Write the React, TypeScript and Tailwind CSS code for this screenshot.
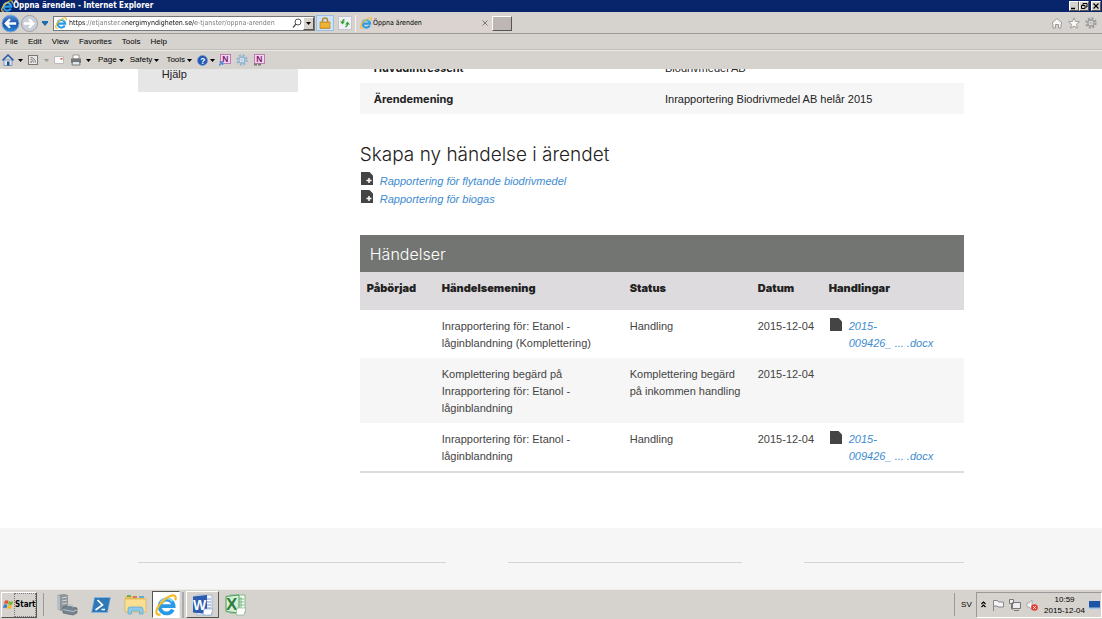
import type { ReactNode } from 'react'
import clsx from 'clsx'

type IconProps = { className?: string }

type Event = {
  text: string
  status: string
  date: string
  file?: { year: string; name: string }
}

const file = { year: '2015-', name: '009426_ ... .docx' }

const events: Event[] = [
  {
    text: 'Inrapportering för: Etanol - låginblandning (Komplettering)',
    status: 'Handling',
    date: '2015-12-04',
    file,
  },
  {
    text: 'Komplettering begärd på Inrapportering för: Etanol - låginblandning',
    status: 'Komplettering begärd på inkommen handling',
    date: '2015-12-04',
  },
  {
    text: 'Inrapportering för: Etanol - låginblandning',
    status: 'Handling',
    date: '2015-12-04',
    file,
  },
]

const menus = ['File', 'Edit', 'View', 'Favorites', 'Tools', 'Help']

const IeIcon = ({ className }: IconProps) => (
  <svg viewBox="0 0 24 24" className={className} fill="none" aria-hidden="true">
    <path d="M19.500 17A7.600 7.600 0 1 1 20.300 13.300H7" stroke="#2a9be6" strokeWidth="4.200" />
    <path d="M5.800 9.500a7.500 7.500 0 0 1 13-1.500" stroke="#8fdcfb" strokeWidth="1.600" />
    <path d="M6 22C2.500 23.500.5 21 2 17 4.500 10 14.500 1.500 20 1.500c3 0 3 3 2 5.500" stroke="#f5bb28" strokeWidth="2.400" />
  </svg>
)

const FileIcon = ({ plus = false }: { plus?: boolean }) => (
  <svg viewBox="0 0 12 13" className="h-[13px] w-3 shrink-0" aria-hidden="true">
    <path d="M0 0h8.500L12 3.500V13H0z" fill="#444" />
    {plus && <path d="M8 6v5M5.500 8.500h5" stroke="#fff" strokeWidth="1.500" />}
  </svg>
)

const Caret = ({ className = 'text-black' }: IconProps) => (
  <svg viewBox="0 0 5 3" className={clsx('h-[3px] w-[5px] shrink-0', className)} aria-hidden="true">
    <path d="M0 0h5L2.500 3z" fill="currentColor" />
  </svg>
)

const OneNoteIcon = ({ linked = false }: { linked?: boolean }) => (
  <svg viewBox="0 0 12 12" className="size-3" aria-hidden="true">
    <rect x="1.500" y=".5" width="10" height="9" fill="#f3d5ee" stroke="#c07ab6" />
    <text x="3.200" y="8.200" fontSize="8.500" fontWeight="700" fill="#7c1c74" fontFamily="Liberation Sans, sans-serif">
      N
    </text>
    {linked ? (
      <path d="M1 10.500h3m1 0h3" stroke="#777" strokeWidth="2" />
    ) : (
      <path d="M0 11.500l3-3M.5 8h3v3" stroke="#4a90d9" strokeWidth="1.500" fill="none" />
    )}
  </svg>
)

const GearIcon = ({ className }: IconProps) => (
  <svg viewBox="0 0 12 12" className={className} fill="none" aria-hidden="true">
    <circle cx="6" cy="6" r="4.700" stroke="currentColor" strokeWidth="2" strokeDasharray="2 1.690" />
    <circle cx="6" cy="6" r="3" fill="#f4f4f4" stroke="currentColor" strokeWidth="1.300" />
    <circle cx="6" cy="6" r="1.200" stroke="currentColor" strokeWidth=".8" />
  </svg>
)

const WindowButton = ({ label, children }: { label: string; children: ReactNode }) => (
  <button
    aria-label={label}
    className="flex h-[10px] w-[10px] items-center justify-center border border-t-white border-l-white border-r-[#555] border-b-[#555] bg-[#d6d3ce]"
  >
    <svg viewBox="0 0 8 8" className="size-2" fill="none" stroke="#000" aria-hidden="true">
      {children}
    </svg>
  </button>
)

const TitleBar = () => (
  <header className="flex h-3 shrink-0 items-center bg-[#08246b] pr-px pl-px font-['DejaVu_Sans_Condensed','DejaVu_Sans',sans-serif] text-[8px] leading-3 font-bold text-white">
    <IeIcon className="size-3" />
    <h1>Öppna ärenden - Internet Explorer</h1>
    <div className="ml-auto flex">
      <WindowButton label="Minimize">
        <path d="M1 6.500h4" strokeWidth="1.500" />
      </WindowButton>
      <WindowButton label="Restore">
        <path d="M3 3V1.500h4V5H5.500M1.500 3.500h3.500v3H1.500z" />
      </WindowButton>
      <span className="w-[2px]" />
      <WindowButton label="Close">
        <path d="M1.500 1.500l5 5m0-5l-5 5" strokeWidth="1.200" />
      </WindowButton>
    </div>
  </header>
)

const NavBar = () => (
  <div className="flex h-[22px] shrink-0 items-center border-b border-[#9c9a96] bg-[#d6d3ce] pt-px">
    <button aria-label="Back" className="ml-px">
      <svg viewBox="0 0 20 20" className="size-[19px]" aria-hidden="true">
        <defs>
          <linearGradient id="back" x2="0" y2="1">
            <stop stopColor="#5b96dc" />
            <stop offset=".5" stopColor="#1550a8" />
            <stop offset="1" stopColor="#2f8fe0" />
          </linearGradient>
        </defs>
        <circle cx="10" cy="10" r="9" fill="url(#back)" stroke="#8fa9cc" />
        <path d="M16 10H5m4.500-4.500L5 10l4.500 4.500" stroke="#fff" strokeWidth="2.500" fill="none" />
      </svg>
    </button>
    <button aria-label="Forward">
      <svg viewBox="0 0 20 20" className="size-[19px]" aria-hidden="true">
        <circle cx="10" cy="10" r="8.500" fill="#c9ced8" stroke="#9a9fa8" />
        <path d="M4 10h10m-4.500-4.500L14 10l-4.500 4.500" stroke="#fff" strokeWidth="2.500" fill="none" />
      </svg>
    </button>
    <button aria-label="Recent pages" className="mx-[3px]">
      <svg viewBox="0 0 6 5" className="h-[5px] w-[6px]" aria-hidden="true">
        <path d="M0 0h6v1.500L3 5 0 1.500z" fill="#1b6dab" />
      </svg>
    </button>
    <div className="ml-[2px] flex h-[15px] w-[262px] items-center border border-[#777] bg-white pl-px">
      <IeIcon className="size-3 shrink-0" />
      <input
        aria-label="Address"
        defaultValue="https://etjanster.energimyndigheten.se/e-tjanster/oppna-arenden"
        className="ml-[2px] h-[13px] min-w-0 flex-1 bg-[linear-gradient(90deg,#111_17px,#777_17px,#777_55px,#111_55px,#111_126px,#777_126px)] bg-clip-text font-['DejaVu_Sans_Condensed','DejaVu_Sans',sans-serif] text-[7px] text-transparent outline-none"
      />
      <svg viewBox="0 0 10 10" className="mr-px size-[10px] shrink-0" fill="none" stroke="#555" aria-hidden="true">
        <circle cx="6" cy="4" r="3" />
        <path d="M4 6L1 9.500" strokeWidth="1.300" />
      </svg>
      <button
        aria-label="Show address bar autocomplete"
        className="flex h-[13px] w-[11px] items-center justify-center border border-white border-r-[#555] border-b-[#555] bg-[#d6d3ce]"
      >
        <Caret />
      </button>
    </div>
    <button aria-label="Security report" className="ml-px flex h-4 w-[18px] justify-center border border-[#9abfe4] bg-[#cde2f7]">
      <svg viewBox="0 0 12 14" className="h-[14px] w-3" aria-hidden="true">
        <path d="M3.500 7V4.500a2.500 2.500 0 0 1 5 0V7" fill="none" stroke="#b88a2c" strokeWidth="1.500" />
        <rect x="1" y="6" width="10" height="6.500" fill="#e5a321" stroke="#b97b13" strokeWidth=".6" />
        <path d="M1.500 8h9m-9 2h9" stroke="#f5cb5e" strokeWidth=".8" />
      </svg>
    </button>
    <button aria-label="Refresh" className="ml-1 flex size-[14px] items-center justify-center border border-[#c5c5cf] bg-[#f2f1f7]">
      <svg viewBox="0 0 12 12" className="size-3" aria-hidden="true">
        <path d="M5.500 2.500Q3.500 3 3.500 5M6.500 10Q8.500 9.500 8.500 7" fill="none" stroke="#35a12e" strokeWidth="1.400" />
        <path d="M1 4.500h5L3.500 7.500zM6 7.500h5L8.500 4.500z" fill="#35a12e" />
      </svg>
    </button>
    <div className="ml-[3px] flex h-[17px] w-[137px] items-center border-l border-[#f3f1ee] bg-[#dad3cf] pr-1 pl-1">
      <IeIcon className="size-3" />
      <span className="ml-px text-[7px] text-black font-['DejaVu_Sans_Condensed','DejaVu_Sans',sans-serif]">
        Öppna ärenden
      </span>
      <button aria-label="Close tab" className="ml-auto">
        <svg viewBox="0 0 6 6" className="size-[6px]" stroke="#777" aria-hidden="true">
          <path d="M.5.5l5 5m0-5l-5 5" />
        </svg>
      </button>
    </div>
    <button
      aria-label="New tab"
      className="h-[15px] w-5 border border-t-white border-l-white border-r-[#555] border-b-[#555] bg-[#bdb6b2]"
    />
    <div className="mr-[5px] ml-auto flex items-center gap-[5px] text-[#999]">
      <button aria-label="Home">
        <svg viewBox="0 0 12 12" className="size-3" fill="#f8f8f8" stroke="currentColor" aria-hidden="true">
          <path d="M1 6l5-4.500L11 6l-1 1v4H7.500V7.500h-3V11H2V7z" />
        </svg>
      </button>
      <button aria-label="Favorites">
        <svg viewBox="0 0 12 12" className="size-3" fill="#f8f8f8" stroke="currentColor" strokeWidth=".9" aria-hidden="true">
          <path d="M6 .8l1.500 3.600 4 .3-3 2.600 1 3.900L6 9.100l-3.500 2.100 1-3.900-3-2.600 4-.3z" />
        </svg>
      </button>
      <button aria-label="Settings">
        <GearIcon className="size-3" />
      </button>
    </div>
  </div>
)

const MenuBar = () => (
  <nav className="flex h-4 shrink-0 items-center gap-[10px] border-b border-[#c2bfbb] bg-[#d6d3ce] pt-px pl-[5px]">
    {menus.map((menu) => (
      <button key={menu} className="text-[8px]">
        {menu}
      </button>
    ))}
  </nav>
)

const CommandBar = () => (
  <div className="flex h-[19px] shrink-0 items-center border-t border-[#eceae7] bg-[#d6d3ce] pl-[2px] text-[8px]">
    <button aria-label="Home page" className="flex items-center gap-1">
      <svg viewBox="0 0 12 12" className="size-3" aria-hidden="true">
        <path d="M2 6h8v5.500H2z" fill="#dce8f7" stroke="#5b79a8" strokeWidth=".7" />
        <path d="M.5 6.500L6 1l5.500 5.500" fill="none" stroke="#2e5fa8" strokeWidth="1.600" />
        <path d="M5 7.500h2.500v4H5z" fill="#264a82" />
      </svg>
      <Caret />
    </button>
    <button aria-label="Feeds" className="ml-[5px] flex items-center gap-[6px]">
      <svg viewBox="0 0 10 10" className="size-[10px]" fill="none" stroke="#777" aria-hidden="true">
        <rect x=".5" y=".5" width="9" height="9" fill="#e9e8e6" />
        <path d="M2.500 4.500a3 3 0 0 1 3 3M2.500 2.500a5 5 0 0 1 5 5" />
        <circle cx="3" cy="7" r=".5" />
      </svg>
      <Caret className="text-[#999]" />
    </button>
    <button aria-label="Read mail" className="ml-[5px]">
      <svg viewBox="0 0 10 8" className="h-2 w-[10px]" aria-hidden="true">
        <path d="M.5.5h9v7h-9z" fill="#fafafa" stroke="#bbb" />
        <path d="M6.500 2h2v1.500h-2z" fill="#e0442e" />
      </svg>
    </button>
    <button aria-label="Print" className="ml-[6px] flex items-center gap-1">
      <svg viewBox="0 0 12 12" className="size-3" aria-hidden="true">
        <path d="M3 1h6v4H3z" fill="#fff" stroke="#777" strokeWidth=".7" />
        <path d="M1 4.500h10V9H1z" fill="#777" />
        <path d="M2.500 7.500h7L10 11H2z" fill="#dbe7ee" stroke="#555" strokeWidth=".7" />
      </svg>
      <Caret />
    </button>
    <button className="ml-[7px] flex items-center gap-[2px]">
      Page <Caret />
    </button>
    <button className="ml-[6px] flex items-center gap-[2px]">
      Safety <Caret />
    </button>
    <button className="ml-[7px] flex items-center gap-[2px]">
      Tools <Caret />
    </button>
    <button aria-label="Help" className="ml-[5px] flex items-center gap-[2px]">
      <svg viewBox="0 0 12 12" className="size-[11px]" aria-hidden="true">
        <circle cx="6" cy="6" r="5.500" fill="#2458b8" stroke="#7799cf" strokeWidth=".8" />
        <text x="3.500" y="9.500" fontSize="9" fontWeight="700" fill="#fff" fontFamily="Liberation Sans, sans-serif">
          ?
        </text>
      </svg>
      <Caret />
    </button>
    <div className="ml-1 flex items-center gap-[5px]">
      <button aria-label="Send to OneNote">
        <OneNoteIcon />
      </button>
      <button aria-label="Options" className="text-[#8fb2d0]">
        <GearIcon className="size-3" />
      </button>
      <button aria-label="OneNote linked notes">
        <OneNoteIcon linked />
      </button>
    </div>
  </div>
)

const EventTable = () => (
  <section className="mt-[27px]">
    <h2 className="flex h-[37px] items-center bg-[#727571] pl-[10px] font-[Inter,sans-serif] text-[16px] font-light text-white">
      Händelser
    </h2>
    <table className="w-full table-fixed border-b-2 border-[#dcdcdc] text-left text-[11px] leading-[17px]">
      <colgroup>
        <col className="w-[75px]" />
        <col className="w-[188px]" />
        <col className="w-[128px]" />
        <col className="w-[71px]" />
        <col />
      </colgroup>
      <thead>
        <tr className="h-[38px] bg-[#dedbdf] align-top font-[Inter,sans-serif] text-[#222]">
          {['Påbörjad', 'Händelsemening', 'Status', 'Datum', 'Handlingar'].map((title) => (
            <th key={title} className="pt-2 pl-[7px] font-black">
              {title}
            </th>
          ))}
        </tr>
      </thead>
      <tbody>
        {events.map((event, i) => (
          <tr key={i} className="align-top text-[#444] even:bg-[#f6f6f6]">
            <td />
            <td className="pt-2 pr-5 pb-[6px] pl-[7px]">{event.text}</td>
            <td className="pt-2 pr-1 pb-[6px] pl-[7px]">{event.status}</td>
            <td className="pt-2 pb-[6px] pl-[7px] whitespace-nowrap">{event.date}</td>
            <td className="pt-2 pr-5 pb-[6px] pl-2">
              {event.file && (
                <a href="#" className="flex gap-[7px] text-[#3d8bd0] italic">
                  <FileIcon />
                  <span>
                    {event.file.year}
                    <wbr />
                    <span className="whitespace-nowrap">{event.file.name}</span>
                  </span>
                </a>
              )}
            </td>
          </tr>
        ))}
      </tbody>
    </table>
  </section>
)

const Taskbar = () => (
  <footer className="flex h-[30px] shrink-0 items-center border-t border-[#eeece9] bg-[#d6d3ce] text-[8px]">
    <button className="ml-px flex h-[26px] w-9 items-center border border-t-white border-l-white border-r-[#555] border-b-[#555] pl-px font-['DejaVu_Sans_Condensed','DejaVu_Sans',sans-serif] text-[8px] font-bold">
      <svg viewBox="0 0 12 12" className="size-[11px] shrink-0" aria-hidden="true">
        <path d="M2 2q2-1.500 4 0L5 5.500Q3 4.500 1 5.500z" fill="#e8542a" />
        <path d="M6.500 2.300q2 1.200 4.500 0L10 6Q7.500 7 5.500 5.700z" fill="#6db33f" />
        <path d="M.8 6.300q2-1 4 0L3.800 10q-2-1-3.800 0z" fill="#3c7dd0" />
        <path d="M5.300 6.600q2 1 4.500 0L8.800 10.300q-2.500 1-4.500-.2z" fill="#f5b921" />
      </svg>
      <span className="border border-dotted border-[#777] py-[5px]">Start</span>
    </button>
    <span className="ml-[6px] h-[23px] w-px bg-[#999]" />
    <div className="ml-[6px] flex items-center">
      <button aria-label="Server Manager" className="flex w-[34px] justify-center">
        <svg viewBox="0 0 22 22" className="size-[22px]" aria-hidden="true">
          <path d="M1 1l7-1 4 1v14l-7 2-4-2z" fill="#8d959b" />
          <path d="M1 1l3 1v14l-3-1z" fill="#b8bfc4" />
          <path d="M6 4l5-1M6 7l5-1M6 10l5-1" stroke="#d4d9dc" />
          <path d="M7 13l4-1 10 2v5l-4 2-10-2z" fill="#74838f" stroke="#59646d" strokeWidth=".7" />
          <path d="M12 12.500v-2l5 1v2M7 15.500l10 2 4-1.500" stroke="#b4c0c9" fill="none" />
        </svg>
      </button>
      <button aria-label="PowerShell" className="flex w-[34px] justify-center">
        <svg viewBox="0 0 20 16" className="h-4 w-5" aria-hidden="true">
          <path d="M3.500.5H19.500L16.500 15.500H.5z" fill="#2e78b8" stroke="#8ab9de" strokeWidth=".7" />
          <path d="M6.500 3l5 5-7 5M10.500 12.500H14" stroke="#fff" strokeWidth="1.700" fill="none" />
        </svg>
      </button>
      <button aria-label="Explorer" className="flex w-[34px] justify-center">
        <svg viewBox="0 0 23 21" className="h-[21px] w-[23px]" aria-hidden="true">
          <path d="M1 2h8l1 2h11v14H1z" fill="#e8c25c" />
          <path d="M3 2h4" stroke="#51a351" strokeWidth="1.500" />
          <path d="M9 3h4" stroke="#d9573c" strokeWidth="1.500" />
          <path d="M15 3h5" stroke="#4a9ad0" strokeWidth="1.500" />
          <path d="M1 5h21v13H1z" fill="#f8df91" stroke="#d8ac43" strokeWidth=".6" />
          <path d="M4 20v-5q0-2 2-2h11q2 0 2 2v5h-3.500v-3h-8v3z" fill="#8dcaea" stroke="#5ba6d0" strokeWidth=".7" />
        </svg>
      </button>
      <button
        aria-label="Internet Explorer"
        className="flex h-[27px] w-7 items-center justify-center border border-[#555] border-r-[#eee] border-b-white bg-white"
      >
        <IeIcon className="size-[22px]" />
      </button>
      <span className="mx-[2px] h-[26px] w-[2px] border-x border-[#aaa]" />
      <button
        aria-label="Word"
        className="flex h-[27px] w-[33px] items-center justify-center border border-t-white border-l-white border-r-[#555] border-b-[#555]"
      >
        <svg viewBox="0 0 22 22" className="size-[22px]" aria-hidden="true">
          <path d="M5 1h15v20H5z" fill="#f8fbff" stroke="#9fb7da" />
          <path d="M15 5h4m-4 3h4m-4 3h4m-4 3h4" stroke="#7297cb" />
          <path d="M1 2.500L15 1v19L1 18.500z" fill="#2b5db0" />
          <text x="1" y="15.500" fontSize="14" fontWeight="700" fill="#fff" fontFamily="Liberation Sans, sans-serif">
            W
          </text>
          <path d="M12 15h9l-2 6h-8z" fill="#fff" stroke="#8fa9d4" strokeWidth=".7" />
        </svg>
      </button>
      <button aria-label="Excel" className="flex w-[34px] justify-center">
        <svg viewBox="0 0 22 22" className="size-[22px]" aria-hidden="true">
          <path d="M5 1h15v18H5z" fill="#fafffa" stroke="#7cb882" />
          <path d="M14 5h5m-5 3h5m-5 3h5m-3-8v11" stroke="#7cb882" />
          <path d="M1 2.500L14 1v18L1 17.500z" fill="#d9eed8" stroke="#4c9d59" />
          <text x="1" y="16" fontSize="17" fontWeight="700" fill="#2a8039" fontFamily="Liberation Sans, sans-serif">
            X
          </text>
          <path d="M12 14h9l-2 7h-8z" fill="#fff" stroke="#88b58b" strokeWidth=".7" />
        </svg>
      </button>
    </div>
    <span className="ml-auto h-[23px] w-px bg-[#999]" />
    <span className="ml-[6px] w-[15px]">SV</span>
    <div className="flex h-[26px] items-center border border-t-[#999] border-l-[#999] border-r-white border-b-white pr-px pl-1">
      <button aria-label="Show hidden icons">
        <svg viewBox="0 0 5 7" className="h-[7px] w-[5px]" fill="none" stroke="#000" strokeWidth="1.200" aria-hidden="true">
          <path d="M.5 3l2-2 2 2M.5 6l2-2 2 2" />
        </svg>
      </button>
      <svg viewBox="0 0 12 12" className="ml-[6px] size-3" fill="#f4f4f4" stroke="#888" aria-hidden="true">
        <path d="M1.500 12V1.500h4l1 1.500h5v5H6L5 7H2" />
      </svg>
      <svg viewBox="0 0 12 12" className="ml-[5px] size-3" fill="#eee" stroke="#777" aria-hidden="true">
        <path d="M3.500 3.500h8v6h-8zM5 11.500h5M.5.500h4v4h-4zM2.500 5v5h2" />
      </svg>
      <svg viewBox="0 0 12 12" className="ml-[5px] size-3" aria-hidden="true">
        <path d="M1 4h2l3-3v10L3 8H1z" fill="#f4f4f4" stroke="#999" strokeWidth=".7" />
        <circle cx="8.500" cy="8.500" r="3.300" fill="#e8392f" />
        <path d="M7.200 7.200l2.600 2.600m0-2.600L7.200 9.800" stroke="#fff" />
      </svg>
      <time className="ml-[6px] text-center leading-[11px]">
        10:59
        <br />
        2015-12-04
      </time>
      <svg viewBox="0 0 11 8" className="ml-1 h-2 w-[11px]" aria-hidden="true">
        <path d="M0 0h11v8H0z" fill="#1d55a5" />
        <path d="M0 6.500h11V8H0z" fill="#9fc4ea" />
      </svg>
    </div>
  </footer>
)

export default function App() {
  return (
    <div className="flex h-screen flex-col overflow-hidden bg-white font-['Liberation_Sans',sans-serif] text-black">
      <TitleBar />
      <NavBar />
      <MenuBar />
      <CommandBar />
      <main className="flex min-h-0 flex-1 flex-col overflow-hidden text-[#222]">
        {/* the page is scrolled, its top slides in under the toolbars */}
        <div className="mx-auto -mt-[17px] flex w-3/4 items-start gap-[62px]">
          <aside className="w-40 shrink-0 bg-[#e6e6e6]">
            <a href="#" className="flex h-10 items-center pt-1 pl-6 text-[11px] leading-3">
              Hjälp
            </a>
          </aside>
          <div className="min-w-0 flex-1">
            <table className="w-full table-fixed text-left text-[11px]">
              <tbody>
                <tr className="h-[31px]">
                  <th className="w-1/2 pt-[2px] pl-[14px] font-[Inter,sans-serif] font-bold">Huvudintressent</th>
                  <td className="pt-[2px] pl-[3px]">Biodrivmedel AB</td>
                </tr>
                <tr className="h-[31px] bg-[#f6f6f6]">
                  <th className="pt-[2px] pl-[14px] font-[Inter,sans-serif] font-bold">Ärendemening</th>
                  <td className="pt-[2px] pl-[3px]">Inrapportering Biodrivmedel AB helår 2015</td>
                </tr>
              </tbody>
            </table>
            <h2 className="mt-[27px] font-[Inter,sans-serif] text-[19px] leading-7 font-light">Skapa ny händelse i ärendet</h2>
            <ul className="mt-[3px] text-[11px] leading-[18px] text-[#3d8bd0] italic">
              {['Rapportering för flytande biodrivmedel', 'Rapportering för biogas'].map((label) => (
                <li key={label}>
                  <a href="#" className="flex gap-[7px] pl-px">
                    <FileIcon plus />
                    {label}
                  </a>
                </li>
              ))}
            </ul>
            <EventTable />
          </div>
        </div>
        <div className="mt-auto h-[61px] shrink-0 bg-[#f6f6f6] pt-[34px]">
          <div className="mx-auto flex w-3/4 justify-between">
            <hr className="w-[308px] border-[#d5d5d5]" />
            <hr className="w-[234px] border-[#d5d5d5]" />
            <hr className="w-40 border-[#d5d5d5]" />
          </div>
        </div>
      </main>
      <Taskbar />
    </div>
  )
}
